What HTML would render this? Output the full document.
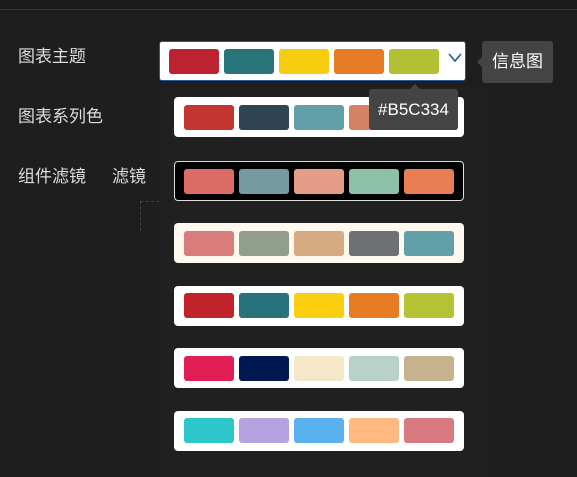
<!DOCTYPE html>
<html><head><meta charset="utf-8"><style>
*{margin:0;padding:0;box-sizing:border-box}
body{width:577px;height:471px;background:#1e1e1e;position:relative;overflow:hidden;font-family:"Liberation Sans","Noto Sans CJK SC",sans-serif;color:#ddd}
.top{position:absolute;left:0;top:0;width:577px;height:10px;background:#1b1b1b;border-bottom:1px solid #333}
.lbl{position:absolute;font-size:17px;line-height:20px;color:#ddd}
.sel{position:absolute;left:159px;top:41px;width:307px;height:40px;background:#fff;border:1px solid #1f5c9c;border-radius:3px}
.sw{position:absolute;width:50px;height:25px;border-radius:3px}
.panel{position:absolute;left:159px;top:87px;width:330px;height:390px;background:#202020}
.row{position:absolute;left:15px;width:290px;height:40px;border-radius:4px;background:#fff}
.tip{position:absolute;background:#444;color:#fff;border-radius:3px;font-size:17px;text-align:center}
</style></head><body>
<div class="top"></div>
<div class="lbl" style="left:18px;top:47px">图表主题</div>
<div class="lbl" style="left:18px;top:107px">图表系列色</div>
<div class="lbl" style="left:18px;top:167px">组件滤镜</div>
<div class="lbl" style="left:112px;top:167px">滤镜</div>
<div style="position:absolute;left:140px;top:201px;width:20px;height:30px;border-left:1px dashed #444;border-top:1px dashed #444"></div>
<div class="panel">
<div class="row" style="top:10px"><div class="sw" style="left:10px;top:8px;background:#c23531"></div><div class="sw" style="left:65px;top:8px;background:#2f4554"></div><div class="sw" style="left:120px;top:8px;background:#61a0a8"></div><div class="sw" style="left:175px;top:8px;background:#d48265"></div><div class="sw" style="left:230px;top:8px;background:#91c7ae"></div></div>
<div class="row" style="top:74px;background:#000;border:1px solid #ddd"><div class="sw" style="left:9px;top:7px;background:#dd6b66"></div><div class="sw" style="left:64px;top:7px;background:#759aa0"></div><div class="sw" style="left:119px;top:7px;background:#e69d87"></div><div class="sw" style="left:174px;top:7px;background:#8dc1a9"></div><div class="sw" style="left:229px;top:7px;background:#ea7e53"></div></div>
<div class="row" style="top:136px;background:#fef8ef"><div class="sw" style="left:10px;top:8px;background:#d87c7c"></div><div class="sw" style="left:65px;top:8px;background:#919e8b"></div><div class="sw" style="left:120px;top:8px;background:#d7ab82"></div><div class="sw" style="left:175px;top:8px;background:#6e7074"></div><div class="sw" style="left:230px;top:8px;background:#61a0a8"></div></div>
<div class="row" style="top:199px"><div class="sw" style="left:10px;top:7px;background:#c1232b"></div><div class="sw" style="left:65px;top:7px;background:#27727b"></div><div class="sw" style="left:120px;top:7px;background:#fcce10"></div><div class="sw" style="left:175px;top:7px;background:#e87c25"></div><div class="sw" style="left:230px;top:7px;background:#b5c334"></div></div>
<div class="row" style="top:261px"><div class="sw" style="left:10px;top:8px;background:#e01f54"></div><div class="sw" style="left:65px;top:8px;background:#001852"></div><div class="sw" style="left:120px;top:8px;background:#f5e8c8"></div><div class="sw" style="left:175px;top:8px;background:#b8d2c7"></div><div class="sw" style="left:230px;top:8px;background:#c6b38e"></div></div>
<div class="row" style="top:324px"><div class="sw" style="left:10px;top:7px;background:#2ec7c9"></div><div class="sw" style="left:65px;top:7px;background:#b6a2de"></div><div class="sw" style="left:120px;top:7px;background:#5ab1ef"></div><div class="sw" style="left:175px;top:7px;background:#ffb980"></div><div class="sw" style="left:230px;top:7px;background:#d87a80"></div></div>
</div>
<div class="sel">
<div class="sw" style="left:9px;top:7px;background:#bd2230"></div>
<div class="sw" style="left:64px;top:7px;background:#29737b"></div>
<div class="sw" style="left:119px;top:7px;background:#f8cd10"></div>
<div class="sw" style="left:174px;top:7px;background:#e57b25"></div>
<div class="sw" style="left:229px;top:7px;background:#b3c034"></div>
<svg style="position:absolute;left:288px;top:11px" width="14" height="10"><path d="M1 1 L7 8 L13 1" stroke="#1f5c9c" stroke-width="1.6" fill="none"/></svg>
</div>
<div class="tip" style="left:369px;top:89px;width:89px;height:41px;line-height:41px">#B5C334</div>
<div style="position:absolute;left:410px;top:84px;width:0;height:0;border-left:5px solid transparent;border-right:5px solid transparent;border-bottom:5px solid #444"></div>
<div class="tip" style="left:482px;top:41px;width:71px;height:42px;line-height:42px">信息图</div>
<div style="position:absolute;left:477px;top:57px;width:0;height:0;border-top:5px solid transparent;border-bottom:5px solid transparent;border-right:5px solid #444"></div>
</body></html>
